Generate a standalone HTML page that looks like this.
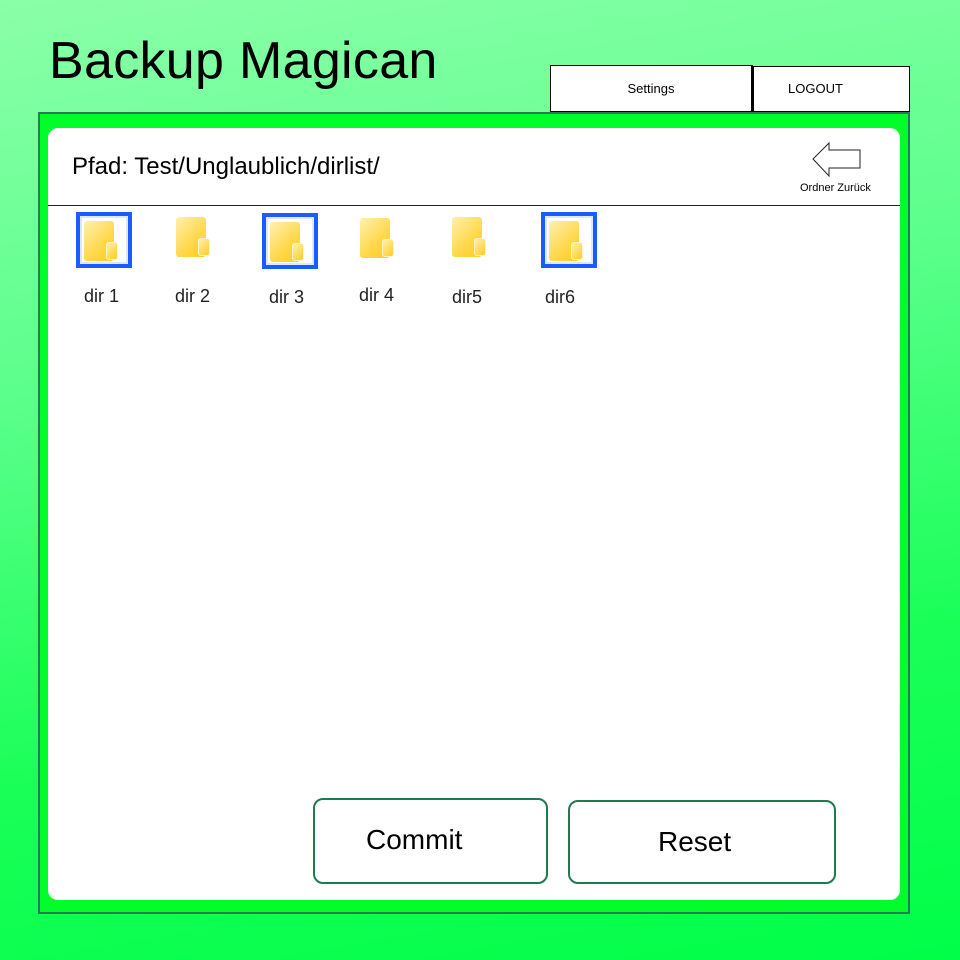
<!DOCTYPE html>
<html><head><meta charset="utf-8"><style>
*{margin:0;padding:0;box-sizing:border-box}
body{width:960px;height:960px;position:relative;overflow:hidden;font-family:"Liberation Sans","DejaVu Sans",sans-serif;background:linear-gradient(170deg,#8affa8 0%,#5cff8c 35%,#1aff58 70%,#00ff48 100%)}
.abs{position:absolute}
.title{left:49px;top:31px;font-size:52px;color:#000;letter-spacing:0.3px}
.tb{background:#fff;border:1px solid #000;font-size:13px;display:flex;align-items:center;justify-content:center}
.frame{left:38px;top:112px;width:872px;height:802px;background:#00ff2a;border:2px solid #2a7a55}
.panel{left:48px;top:128px;width:852px;height:772px;background:#fff;border-radius:10px}
.line{left:48px;top:205px;width:852px;height:1px;background:#222}
.ic{width:56px;height:56px}
.sel{border:4px solid #1a5cff;box-shadow:inset 0 0 0 2px #dfe8ff}
.f{position:absolute;width:30px;height:40px;border-radius:3px;background:linear-gradient(135deg,#fff0b0,#ffd84a 60%,#ffcc20)}
.f2{position:absolute;width:12px;height:18px;border-radius:3px;background:linear-gradient(135deg,#fff0b0,#ffcc20);border:1px solid #fff3c8}
.lbl{font-size:18px;color:#222;top:286px}
.btn{border:2px solid #1f7a50;border-radius:10px;background:#fff;font-size:28px;color:#000;line-height:80px}
</style></head><body>
<div class="abs title">Backup Magican</div>
<div class="abs tb" style="left:550px;top:65px;width:203px;height:48px;border-width:1px 2px 2px 1px">Settings</div>
<div class="abs tb" style="left:753px;top:66px;width:157px;height:46px;justify-content:flex-start;padding-left:34px;padding-bottom:2px;align-items:center">LOGOUT</div>
<div class="abs frame"></div>
<div class="abs panel"></div>
<div class="abs" style="left:72px;top:153px;font-size:24px;color:#000">Pfad: Test/Unglaublich/dirlist/</div>
<svg class="abs" style="left:812px;top:142px" width="50" height="36"><path d="M1 17 L17 1 L17 8 L48 8 L48 26 L17 26 L17 34 Z" fill="#fff" stroke="#222" stroke-width="1"/></svg>
<div class="abs" style="left:800px;top:182px;font-size:11px;color:#000">Ordner Zurück</div>
<div class="abs line"></div>

<div class="abs ic sel" style="left:76px;top:212px"><div class="f" style="left:4px;top:5px"></div><div class="f2" style="left:26px;top:26px"></div></div>
<div class="abs ic" style="left:168px;top:212px"><div class="f" style="left:8px;top:5px"></div><div class="f2" style="left:30px;top:26px"></div></div>
<div class="abs ic sel" style="left:262px;top:213px"><div class="f" style="left:4px;top:5px"></div><div class="f2" style="left:26px;top:26px"></div></div>
<div class="abs ic" style="left:352px;top:212px"><div class="f" style="left:8px;top:6px"></div><div class="f2" style="left:30px;top:27px"></div></div>
<div class="abs ic" style="left:444px;top:212px"><div class="f" style="left:8px;top:5px"></div><div class="f2" style="left:30px;top:26px"></div></div>
<div class="abs ic sel" style="left:541px;top:212px"><div class="f" style="left:4px;top:5px"></div><div class="f2" style="left:26px;top:26px"></div></div>

<div class="abs lbl" style="left:84px">dir 1</div>
<div class="abs lbl" style="left:175px">dir 2</div>
<div class="abs lbl" style="left:269px;top:287px">dir 3</div>
<div class="abs lbl" style="left:359px;top:285px">dir 4</div>
<div class="abs lbl" style="left:452px;top:287px">dir5</div>
<div class="abs lbl" style="left:545px;top:287px">dir6</div>

<div class="abs btn" style="left:313px;top:798px;width:235px;height:86px;padding-left:51px">Commit</div>
<div class="abs btn" style="left:568px;top:800px;width:268px;height:84px;padding-left:88px">Reset</div>
</body></html>
